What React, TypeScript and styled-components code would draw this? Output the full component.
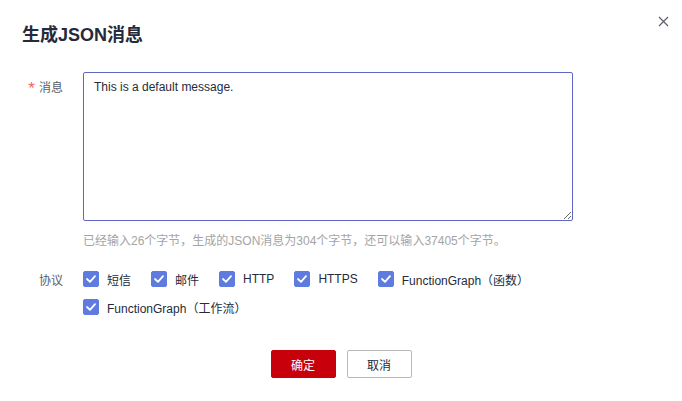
import React, { useState } from 'react'
import styled, { createGlobalStyle } from 'styled-components'

const GlobalStyle = createGlobalStyle`
  html, body {
    margin: 0;
    padding: 0;
    background: #fff;
  }
  body {
    font-family: "Liberation Sans", "Noto Sans CJK SC", sans-serif;
    color: #252b3a;
  }
`

const Dialog = styled.div`
  position: relative;
  width: 682px;
  height: 401px;
  box-sizing: border-box;
  padding: 24px 0 0;
  background: #fff;
`

const CloseButton = styled.button`
  position: absolute;
  top: 14px;
  right: 12px;
  width: 14px;
  height: 14px;
  padding: 0;
  border: none;
  background: none;
  cursor: pointer;
  display: flex;
  align-items: center;
  justify-content: center;
`

const Title = styled.h2`
  margin: 0 0 0 22px;
  font-size: 18px;
  line-height: 22px;
  font-weight: 700;
  color: #252b3a;
`

const Form = styled.div`
  margin-top: 26px;
  display: flex;
  flex-direction: column;
`

const FormRow = styled.div<{ $gap?: number }>`
  display: grid;
  grid-template-columns: 63px 490px;
  column-gap: 20px;
  margin-top: ${p => p.$gap ?? 0}px;
`

const Label = styled.label<{ $lineHeight?: number }>`
  display: flex;
  justify-content: flex-end;
  align-items: center;
  align-self: start;
  height: ${p => p.$lineHeight ?? 16}px;
  margin-top: ${p => (p.$lineHeight ? 0 : 6)}px;
  font-size: 12px;
  color: #575d6c;
  white-space: nowrap;
`

const Required = styled.span`
  color: #f0645f;
  font-size: 17px;
  line-height: 16px;
  margin-right: 4px;
  padding-top: 5px;
`

const MessageBox = styled.textarea`
  width: 490px;
  height: 149px;
  box-sizing: border-box;
  padding: 6px 10px;
  border: 1px solid #5e68c4;
  border-radius: 2px;
  font-family: "Liberation Sans", "Noto Sans CJK SC", sans-serif;
  font-size: 12px;
  line-height: 16px;
  color: #252b3a;
  outline: none;
  resize: vertical;
`

const Hint = styled.div`
  margin-top: 8px;
  font-size: 12px;
  line-height: 16px;
  color: #a4a4a4;
  white-space: nowrap;
`

const CheckGroup = styled.div`
  display: flex;
  flex-wrap: wrap;
`

const CheckItem = styled.label`
  display: flex;
  align-items: center;
  height: 28px;
  margin-right: 20px;
  font-size: 12px;
  color: #252b3a;
  white-space: nowrap;
  cursor: pointer;
`

const Box = styled.span<{ $checked: boolean }>`
  width: 16px;
  height: 16px;
  box-sizing: border-box;
  margin-right: 8px;
  border-radius: 2px;
  display: flex;
  align-items: center;
  justify-content: center;
  background: ${p => (p.$checked ? '#5e7ce0' : '#fff')};
  border: 1px solid ${p => (p.$checked ? '#5e7ce0' : '#adb0b8')};
`

const Footer = styled.div`
  margin-top: 29px;
  display: flex;
  justify-content: center;
  gap: 11px;
`

const Button = styled.button<{ $primary?: boolean }>`
  width: 65px;
  height: 28px;
  box-sizing: border-box;
  border-radius: 2px;
  font-family: "Liberation Sans", "Noto Sans CJK SC", sans-serif;
  font-size: 12px;
  cursor: pointer;
  background: ${p => (p.$primary ? '#c7000b' : '#fff')};
  color: ${p => (p.$primary ? '#fff' : '#252b3a')};
  border: 1px solid ${p => (p.$primary ? '#c7000b' : '#b8b8b8')};
`

const protocols = ['短信', '邮件', 'HTTP', 'HTTPS', 'FunctionGraph（函数）', 'FunctionGraph（工作流）']

function Checkbox({ label, checked, onToggle }: { label: string; checked: boolean; onToggle: () => void }) {
  return (
    <CheckItem onClick={onToggle}>
      <Box $checked={checked}>
        {checked && (
          <svg width="10" height="8" viewBox="0 0 10 8">
            <path d="M1 4 L4 6.8 L9 1.2" fill="none" stroke="#fff" strokeWidth="1.8" strokeLinecap="round" strokeLinejoin="round" />
          </svg>
        )}
      </Box>
      {label}
    </CheckItem>
  )
}

function App() {
  const [message, setMessage] = useState('This is a default message.')
  const [checked, setChecked] = useState<boolean[]>(protocols.map(() => true))

  function toggle(i: number) {
    setChecked(c => c.map((v, j) => (j === i ? !v : v)))
  }

  return (
    <>
      <GlobalStyle />
      <Dialog>
        <CloseButton aria-label="关闭">
          <svg width="11" height="11" viewBox="0 0 11 11">
            <path d="M1 1 L10 10 M10 1 L1 10" stroke="#5a5f6b" strokeWidth="1.2" />
          </svg>
        </CloseButton>
        <Title>生成JSON消息</Title>
        <Form>
          <FormRow>
            <Label><Required>*</Required>消息</Label>
            <div>
              <MessageBox value={message} onChange={e => setMessage(e.target.value)} />
              <Hint>已经输入26个字节，生成的JSON消息为304个字节，还可以输入37405个字节。</Hint>
            </div>
          </FormRow>
          <FormRow $gap={16}>
            <Label $lineHeight={28}>协议</Label>
            <CheckGroup>
              {protocols.map((p, i) => (
                <Checkbox key={p} label={p} checked={checked[i]} onToggle={() => toggle(i)} />
              ))}
            </CheckGroup>
          </FormRow>
        </Form>
        <Footer>
          <Button $primary>确定</Button>
          <Button>取消</Button>
        </Footer>
      </Dialog>
    </>
  )
}

export default App
